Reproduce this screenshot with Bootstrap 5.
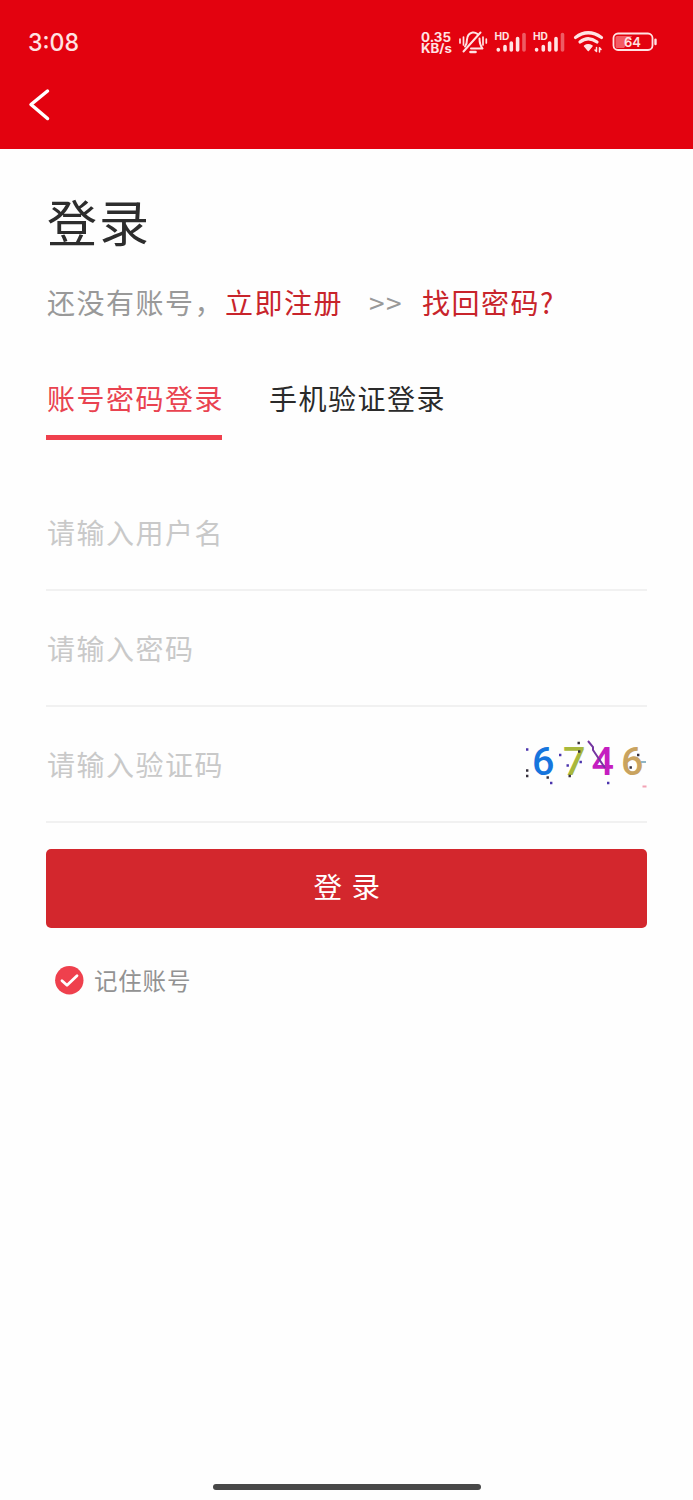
<!DOCTYPE html>
<html lang="zh-CN">
<head>
<meta charset="utf-8">
<meta name="viewport" content="width=device-width, initial-scale=1">
<title>登录</title>
<link href="https://cdn.jsdelivr.net/npm/bootstrap@5.3.0/dist/css/bootstrap.min.css" rel="stylesheet">
<style>
body{font-family:"Noto Sans CJK SC",sans-serif;font-size:28px;line-height:40px;letter-spacing:1.5px;color:#2d2d2d;background:#fefefe}
.screen{height:1500px;overflow:hidden}
.app-head{height:149px;background:#e3020f;padding:0 0 0 28px}
.status-row{height:84px;letter-spacing:0}
.status-row svg,.back-row svg{display:block}
.back-row{height:42px}
.body-pad{padding:0 46px}
.title-text{font-size:50px;line-height:60px;letter-spacing:2px;margin:41px 0 0 1px;font-weight:400}
.hint-row{margin:32px 0 0 1px;color:#999;white-space:pre}
.hint-row a{color:#c8242b;text-decoration:none}
.tab-row{margin-top:56px;gap:46px}
.tab-row .nav-link{padding:0 0 17px;width:176px;color:#2a2a2a;border-bottom:5px solid transparent;white-space:nowrap;text-indent:1px}
.tab-row .nav-link.active{color:#e94350;border-color:#ef404d}
.fields{margin-top:35px}
.field-row{height:116px;border-bottom:2px solid #f1f1f1}
.field-row .form-control{border:0;border-radius:0;background:none;box-shadow:none;padding:0 0 0 1px;font-size:28px;letter-spacing:1.5px;height:44px;min-width:0}
.field-row .form-control::placeholder{color:#c9c9c9;opacity:1}
.btn-login{margin-top:26px;height:79px;background:#d3272d;color:#fff;border:0;border-radius:5px;font-size:28.5px;letter-spacing:1.6px;padding:0 0 4px 2px}
.btn-login:hover{background:#c02026;color:#fff}
.remember{margin:32px 0 0 9px;font-size:23.5px;letter-spacing:.8px;color:#929292;gap:10px}
.home-bar{width:268px;height:6px;border-radius:3px;background:#484848;margin-bottom:10px}
</style>
</head>
<body>
<div class="screen d-flex flex-column">
  <header class="app-head">
    <div class="status-row d-flex align-items-center">
      <svg width="665" height="84" viewBox="28 0 665 84" fill="none" stroke-linecap="round" stroke-linejoin="round">
        <path d="M617 36H632L624 48H617Q615.500 48 615.500 46.500V37.500Q615.500 36 617 36Z" fill="#f45b64"/>
        <g fill="#ffe3e3" font-family="Inter, sans-serif" font-weight="700">
          <text x="28" y="50.500" font-size="24" font-weight="500" textLength="51" lengthAdjust="spacingAndGlyphs">3:08</text>
          <text x="421" y="41.500" font-size="13" textLength="30" lengthAdjust="spacingAndGlyphs">0.35</text>
          <text x="421" y="53" font-size="12.500" textLength="31" lengthAdjust="spacingAndGlyphs">KB/s</text>
          <text x="494.500" y="39.500" font-size="10" textLength="15" lengthAdjust="spacingAndGlyphs">HD</text>
          <text x="533" y="39.500" font-size="10" textLength="15" lengthAdjust="spacingAndGlyphs">HD</text>
          <text x="624" y="46.800" font-size="13.500" font-weight="600" textLength="17" lengthAdjust="spacingAndGlyphs">64</text>
        </g>
        <g stroke="#ffe3e3" stroke-width="2">
          <path d="M465 46.500Q467 44 467 39.500Q467.500 33.500 472.500 32.500Q475 32 477.500 34M479.500 38.500Q479.500 44.500 482.500 48.500H471M463.500 51.500L480.500 32.500"/>
          <path d="M460 39V43M463.500 37V45M483 37V45M486.300 39V43" stroke-width="1.700"/>
          <path d="M470.500 52H475.500" stroke-width="2.600"/>
        </g>
        <g stroke="#ffe3e3" stroke-width="3.600">
          <path d="M498.300 49.500V49.900M505 46.500V49.900M511.300 43V49.900M517.600 38.500V49.900"/>
          <path d="M524 34.500V49.900" opacity=".4"/>
          <path d="M536.600 49.500V49.900M543.300 46.500V49.900M549.600 43V49.900M556 38.500V49.900"/>
          <path d="M562.500 34.500V49.900" opacity=".4"/>
        </g>
        <g stroke="#ffe3e3" stroke-width="3.200">
          <path d="M575.500 37.500Q588 28 601.500 37.500M580 42Q588 35.500 597 42"/>
          <path d="M584.500 46Q588 43.500 592 46L588.300 50.500Z" fill="#ffe3e3" stroke-width="1.500"/>
          <path d="M596.500 47.500V51.500L595 50M599.500 52V47.800L601 49.500" stroke-width="1.500"/>
        </g>
        <rect x="613.500" y="33.500" width="39" height="16.500" rx="4.500" stroke="#ffe3e3" stroke-width="1.800"/>
        <path d="M655.500 39.800V44" stroke="#ffe3e3" stroke-width="2.400"/>
      </svg>
    </div>
    <div class="back-row d-flex align-items-center">
      <svg width="24" height="36" viewBox="0 0 24 36" fill="none" stroke="#fff" stroke-width="3.500" stroke-linecap="round" stroke-linejoin="round" role="button" aria-label="返回"><path d="M19.500 4L3 17.500L19.500 31.500"/></svg>
    </div>
  </header>

  <main class="body-pad flex-grow-1">
    <h1 class="title-text">登录</h1>
    <div class="hint-row d-flex"><span style="width:178px">还没有账号，</span><a href="#" style="width:144px">立即注册</a><span style="width:53px">&gt;&gt;</span><a href="#">找回密码?</a></div>
    <nav class="nav tab-row">
      <a class="nav-link active" href="#">账号密码登录</a>
      <a class="nav-link" href="#">手机验证登录</a>
    </nav>
    <form class="fields">
      <div class="field-row d-flex align-items-center"><input class="form-control" placeholder="请输入用户名"></div>
      <div class="field-row d-flex align-items-center"><input class="form-control" type="text" placeholder="请输入密码"></div>
      <div class="field-row d-flex align-items-center">
        <input class="form-control" placeholder="请输入验证码">
        <svg class="flex-shrink-0" width="125" height="60" viewBox="523 734 125 60" fill="none">
          <g font-family="Roboto, sans-serif" font-size="39.500" font-weight="500">
            <text x="533" y="775.300" fill="#1675dd">6</text>
            <text x="564" y="775.300" fill="#a8b83c">7</text>
            <text x="592.500" y="775.300" fill="#c51dc0">4</text>
            <text x="622" y="775.300" fill="#c9a35f">6</text>
          </g>
          <path d="M589 741L594 747V750L598 756L606 768" stroke="#7436a0" stroke-width="2"/>
          <path d="M527 749.500h2.400M560 755h2.400M567.500 765.500h2.400M580.500 762h2.400M551 783h2.400M608 783h2.400" stroke="#4c35ad" stroke-width="2.400"/>
          <path d="M527 770.500h2.400M527 776h2.400M547.500 777.500h2.400M578.500 743h2.400M579 751.500h2.400M569.500 776h2.400M638 755h2.400M630.500 767.500h2.400" stroke="#36303c" stroke-width="2.400"/>
          <path d="M642 762h5" stroke="#8fb5c5" stroke-width="2"/><path d="M643.500 786.500h4" stroke="#f3a3b5" stroke-width="2"/>
        </svg>
      </div>
      <button class="btn btn-login w-100" type="button">登 录</button>
      <div class="remember d-flex align-items-center">
        <svg width="29" height="29" viewBox="0 0 29 29"><circle cx="14.300" cy="14.300" r="14.200" fill="#ef404d"/><path d="M7 14.800L12 19.300L22 9.800" fill="none" stroke="#fff" stroke-width="2.800" stroke-linecap="round" stroke-linejoin="round"/></svg>
        <span>记住账号</span>
      </div>
    </form>
  </main>
  <div class="home-bar mx-auto"></div>
</div>
<script src="https://cdn.jsdelivr.net/npm/bootstrap@5.3.0/dist/js/bootstrap.bundle.min.js"></script>
</body>
</html>
